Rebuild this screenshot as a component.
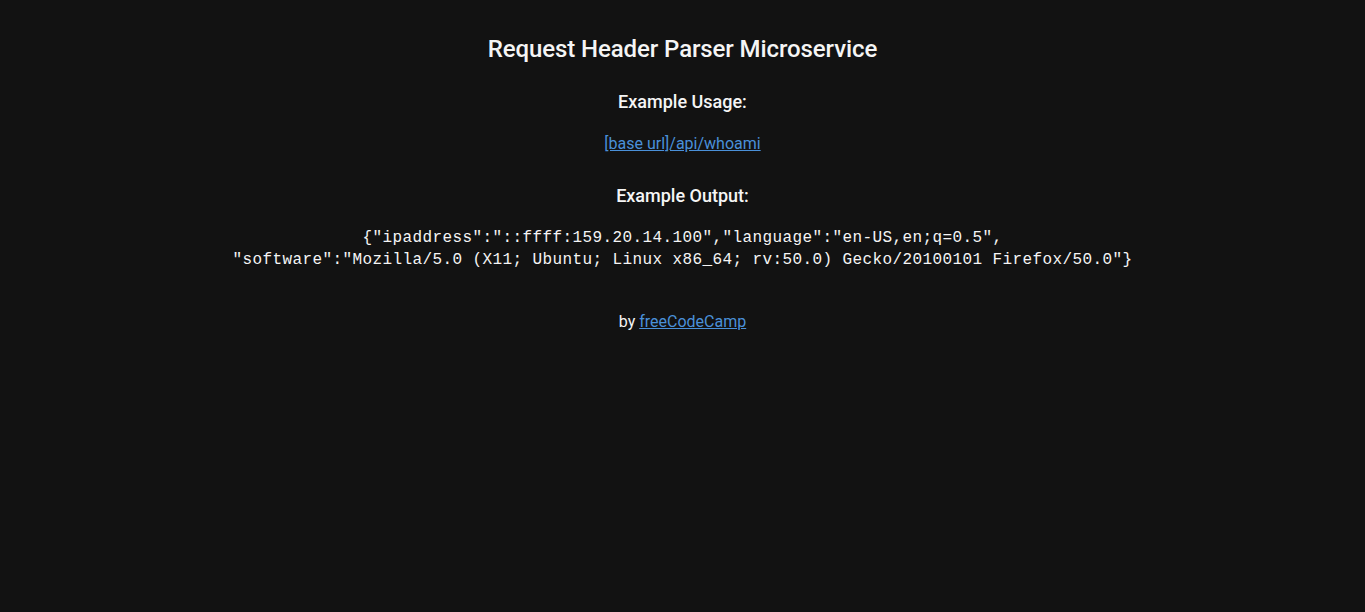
export default function App() {
  return (
    <div className="min-h-[612px] bg-[#121212] text-[#f5f5f5] text-center" style={{ fontFamily: "Roboto, 'Noto Sans', sans-serif" }}>
      <div className="pt-[35px]">
        <h1 className="text-[24px] leading-[28px] font-medium tracking-[-0.1px]">Request Header Parser Microservice</h1>
        <h3 className="mt-[28px] text-[18px] leading-[21px] font-medium">Example Usage:</h3>
        <p className="mt-[22px] text-[16px] leading-[19px]">
          <a href="#" className="text-[#4a90d9] underline">[base url]/api/whoami</a>
        </p>
        <h3 className="mt-[32px] text-[18px] leading-[21px] font-medium">Example Output:</h3>
        <p className="mt-[21px] text-[16px] leading-[22px] tracking-[0.4px]" style={{ fontFamily: "'Liberation Mono', monospace" }}>
          {'{"ipaddress":"::ffff:159.20.14.100","language":"en-US,en;q=0.5",'}
          <br />
          {'"software":"Mozilla/5.0 (X11; Ubuntu; Linux x86_64; rv:50.0) Gecko/20100101 Firefox/50.0"}'}
        </p>
        <p className="mt-[41px] text-[16px] leading-[19px]">
          by <a href="#" className="text-[#4a90d9] underline">freeCodeCamp</a>
        </p>
      </div>
    </div>
  );
}
